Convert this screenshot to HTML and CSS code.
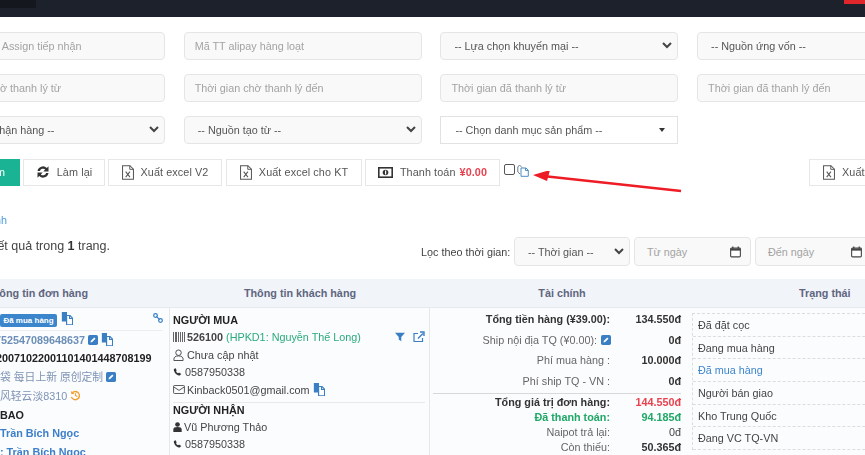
FILE: index.html
```html
<!DOCTYPE html>
<html>
  <head>
    <title>Danh sách đơn hàng</title>
    <link rel="stylesheet" href="styles.css">
  </head>
  <body>
    <svg class="defs" width="0" height="0">
      <symbol id="i-copy" viewBox="0 0 14 15">
        <path d="M1 0h6v4h-1v7h-5z" fill="#3a7fc4"/>
        <path d="M6.5 4h4l3 3v8h-7z" fill="#fff" stroke="#3a7fc4" stroke-width="1.4"/>
        <path d="M10 4v3.500h3.500" fill="none" stroke="#3a7fc4" stroke-width="1.4"/>
      </symbol>
      <symbol id="i-edit" viewBox="0 0 12 12">
        <rect width="12" height="12" rx="2" fill="#3a7fc4"/>
        <path d="M3 9l.5-2 4-4 1.500 1.500-4 4z" fill="#fff"/>
      </symbol>
      <symbol id="i-excel" viewBox="0 0 13 16">
        <path d="M.6.6h8l3.800 3.800v11H.6z" fill="#fff" stroke="#555" stroke-width="1.100"/>
        <path d="M8.400.6v4h4" fill="none" stroke="#555"/>
        <path d="M4 7l4.600 6M8.600 7l-4.600 6" fill="none" stroke="#555" stroke-width="1.100"/>
      </symbol>
      <symbol id="i-phone" viewBox="0 0 12 12">
        <path d="M1 2.500l2-2 2 3-1 1c.5 1.500 1.500 2.500 3 3l1-1 3 2-2 2C5 10.500 1.500 7 1 2.500z" fill="#333"/>
      </symbol>
      <symbol id="i-calendar" viewBox="0 0 12 12">
        <rect x=".7" y="1.700" width="10.600" height="9.600" rx="1" fill="#fff" stroke="#444" stroke-width="1.200"/>
        <path d="M.7 2h10.600v2.500H.7z" fill="#444"/>
        <path d="M3 0v2.500M9 0v2.500" stroke="#444" stroke-width="1.400"/>
      </symbol>
    </svg>

    <div class="navbar">
      <span class="nav-logo"></span>
      <span class="nav-alert"></span>
    </div>

    <div class="page">
      <form class="filters">
        <input class="field assign-field" placeholder="Nhân viên được Assign tiếp nhận" />
        <input class="field" placeholder="Mã TT alipay hàng loạt" />
        <select class="field"><option>-- Lựa chọn khuyến mại --</option></select>
        <select class="field"><option>-- Nguồn ứng vốn --</option></select>

        <input class="field wait-field" placeholder="Thời gian chờ thanh lý từ" />
        <input class="field" placeholder="Thời gian chờ thanh lý đến" />
        <input class="field" placeholder="Thời gian đã thanh lý từ" />
        <input class="field" placeholder="Thời gian đã thanh lý đến" />

        <select class="field"><option>-- Trạng thái nhận hàng --</option></select>
        <select class="field"><option>-- Nguồn tạo từ --</option></select>
        <div class="multi">-- Chọn danh mục sản phẩm --<span class="caret"></span></div>
      </form>

      <div class="actions">
        <button type="button" class="btn btn-green">Tìm kiếm</button>
        <button type="button" class="btn btn-reset">
          <svg class="ico-reset" viewBox="0 0 14 14"><path d="M1.500 6a5.500 5.500 0 0 1 9.300-3L12.500 1.300V6.500H7.300l1.900-1.900A3.200 3.200 0 0 0 3.900 6zM12.500 8a5.500 5.500 0 0 1-9.300 3L1.500 12.700V7.500h5.200l-1.900 1.900A3.200 3.200 0 0 0 10.100 8z" fill="#333"/></svg>
          Làm lại
        </button>
        <button type="button" class="btn btn-v2"><svg class="ico-excel"><use href="#i-excel"/></svg>Xuất excel V2</button>
        <button type="button" class="btn btn-kt"><svg class="ico-excel"><use href="#i-excel"/></svg>Xuất excel cho KT</button>
        <button type="button" class="btn btn-pay">
          <svg class="ico-money" viewBox="0 0 15 11"><rect x=".8" y=".8" width="13.400" height="9.400" fill="#fff" stroke="#333" stroke-width="1.600"/><circle cx="7.500" cy="5.500" r="2.800" fill="#333"/><rect x="7" y="3.500" width="1.200" height="4" fill="#fff"/></svg>
          Thanh toán <b class="price">¥0.00</b>
        </button>
        <span class="check-box"></span>
        <svg class="ico-copy-top" viewBox="0 0 12 13"><path d="M5 3.500L2.500 1 .8 3v5l2.200 2" fill="none" stroke="#6b7c90"/><path d="M4 4h5l2.300 2.300v6H4z" fill="#fff" stroke="#4a8cc9"/><path d="M8.500 4v2.500h2.800" fill="none" stroke="#4a8cc9"/></svg>
        <button type="button" class="btn btn-right"><svg class="ico-excel"><use href="#i-excel"/></svg>Xuất excel</button>
      </div>

      <div class="quick-link"><a href="#">Lọc nhanh</a></div>

      <div class="result-row">
        <div class="summary">Có 1 kết quả trong <b>1</b> trang.</div>
        <div class="time-filter">
          <label>Lọc theo thời gian:</label>
          <select class="field time-select"><option>-- Thời gian --</option></select>
          <div class="date-box">Từ ngày<svg class="ico-cal"><use href="#i-calendar"/></svg></div>
          <div class="date-box">Đến ngày<svg class="ico-cal"><use href="#i-calendar"/></svg></div>
        </div>
      </div>

      <div class="orders">
        <div class="head head-order">Thông tin đơn hàng</div>
        <div class="head">Thông tin khách hàng</div>
        <div class="head head-money">Tài chính</div>
        <div class="head head-status">Trạng thái</div>

        <div class="cell order-cell">
          <div class="order-top">
            <span class="badge">Đã mua hàng</span>
            <svg class="ico-copy"><use href="#i-copy"/></svg>
            <svg class="ico-link" viewBox="0 0 12 12"><circle cx="3" cy="3" r="2.200" fill="none" stroke="#3a7fc4" stroke-width="1.500"/><circle cx="9" cy="9" r="2.200" fill="none" stroke="#3a7fc4" stroke-width="1.500"/><path d="M4 4l4 4" stroke="#3a7fc4" stroke-width="1.500"/></svg>
          </div>
          <div class="order-line code">752547089648637<svg class="ico-edit"><use href="#i-edit"/></svg><svg class="ico-copy"><use href="#i-copy"/></svg></div>
          <div class="order-line strong long">20071022001101401448708199</div>
          <div class="order-line cjk">袋 每日上新 原创定制<svg class="ico-edit"><use href="#i-edit"/></svg></div>
          <div class="order-line cjk">风轻云淡8310<svg class="ico-history" viewBox="0 0 12 12"><path d="M2.500 3a4.500 4.500 0 1 1-1 4.500" fill="none" stroke="#f0a030" stroke-width="1.500"/><path d="M1 1l.5 3.500L5 4z" fill="#f0a030"/><path d="M6 3.500V6l2 1" fill="none" stroke="#f0a030" stroke-width="1.200"/></svg></div>
          <div class="order-line strong">BAO</div>
          <div class="order-line staff">Trần Bích Ngọc</div>
          <div class="order-line staff">: Trần Bích Ngọc</div>
        </div>

        <div class="cell customer-cell">
          <div class="cust-title">NGƯỜI MUA</div>
          <div class="cust-line">
            <svg class="ico-bar" viewBox="0 0 12 10"><path d="M0 0h1v10H0zM2 0h2v10H2zM5 0h1v10H5zM7 0h1v10H7zM9 0h1v10H9zM11 0h1v10h-1z" fill="#666"/></svg>
            <b class="cust-id">526100</b>&nbsp;<span class="cust-green">(HPKD1: Nguyễn Thế Long)</span>
            <svg class="ico-filter" viewBox="0 0 12 12"><path d="M0 1h12L7.500 6v5l-3-2V6z" fill="#3a7fc4"/></svg>
            <svg class="ico-out" viewBox="0 0 12 12"><path d="M9.500 7v3.500h-8.500V2.500H5" fill="none" stroke="#3a7fc4" stroke-width="1.200"/><path d="M5 7.500l5-5M7 1h4v4" fill="none" stroke="#3a7fc4" stroke-width="1.400"/></svg>
          </div>
          <div class="cust-line">
            <svg class="ico-user" viewBox="0 0 12 13"><circle cx="6" cy="4" r="3" fill="none" stroke="#444"/><path d="M1 12.500V11c0-2 1.500-3.500 5-3.500s5 1.500 5 3.500v1.500z" fill="none" stroke="#444"/></svg>Chưa cập nhật
          </div>
          <div class="cust-line"><svg class="ico-phone"><use href="#i-phone"/></svg>0587950338</div>
          <div class="cust-line">
            <svg class="ico-mail" viewBox="0 0 13 10"><rect x=".5" y=".5" width="12" height="9" rx="1" fill="none" stroke="#444"/><path d="M.5 2l6 4 6-4" fill="none" stroke="#444"/></svg>Kinback0501@gmail.com<svg class="ico-copy mail-copy"><use href="#i-copy"/></svg>
          </div>
          <div class="cust-title second">NGƯỜI NHẬN</div>
          <div class="cust-line">
            <svg class="ico-person" viewBox="0 0 10 12"><circle cx="5" cy="3" r="2.800" fill="#333"/><path d="M0 12V9c0-2 1.500-3 5-3s5 1 5 3v3z" fill="#333"/></svg>Vũ Phương Thảo
          </div>
          <div class="cust-line"><svg class="ico-phone"><use href="#i-phone"/></svg>0587950338</div>
        </div>

        <div class="cell money-cell">
          <div class="money-top">
            <div class="money-row"><b>Tổng tiền hàng (¥39.00):</b><b class="val">134.550đ</b></div>
            <div class="money-row"><span>Ship nội địa TQ (¥0.00):<svg class="ico-edit"><use href="#i-edit"/></svg></span><b class="val">0đ</b></div>
            <div class="money-row"><span>Phí mua hàng :</span><b class="val">10.000đ</b></div>
            <div class="money-row"><span>Phí ship TQ - VN :</span><b class="val">0đ</b></div>
          </div>
          <div class="money-row tight"><b>Tổng giá trị đơn hàng:</b><b class="val red">144.550đ</b></div>
          <div class="money-row tight green"><b>Đã thanh toán:</b><b class="val">94.185đ</b></div>
          <div class="money-row tight"><span>Naipot trả lại:</span><span class="val">0đ</span></div>
          <div class="money-row tight"><span>Còn thiếu:</span><b class="val">50.365đ</b></div>
        </div>

        <div class="cell status-cell">
          <ul class="status-list">
            <li>Đã đặt cọc</li>
            <li>Đang mua hàng</li>
            <li class="active">Đã mua hàng</li>
            <li>Người bán giao</li>
            <li>Kho Trung Quốc</li>
            <li>Đang VC TQ-VN</li>
          </ul>
        </div>
      </div>
    </div>

    <!-- annotation arrow drawn over the screenshot -->
    <svg class="arrow" width="160" height="30" viewBox="0 0 160 30">
      <path d="M150 20L12 5" stroke="#ee1c25" stroke-width="2.600" fill="none"/>
      <path d="M2 4l17-5-3 11z" fill="#ee1c25"/>
    </svg>
  </body>
</html>
```

FILE: styles.css
```css
* {
  box-sizing: border-box;
}

html,
body {
  margin: 0;
  height: 455px;
  overflow: hidden;
}

body {
  position: relative;
  font-family: "Liberation Sans", Arial, "Noto Sans CJK SC", sans-serif;
  font-size: 10.8px;
  color: #555;
  background: #fff;
  filter: blur(0.35px);
}

.defs {
  position: absolute;
}

.navbar {
  height: 17px;
  background: #1c212c;
  display: flex;
  justify-content: space-between;
  align-items: flex-start;
}

.nav-logo {
  width: 36px;
  height: 8px;
  background: #14171e;
}

.nav-alert {
  width: 21px;
  height: 4px;
  background: #e0252b;
}

/* the page is wider than the window, its left side is cut off */
.page {
  width: 1017px;
  margin-left: -82px;
}

.filters {
  display: grid;
  grid-template-columns: 247px 238px 238px 238px;
  column-gap: 18.7px;
  row-gap: 13.5px;
  padding-top: 14.5px;
}

.field {
  height: 28.5px;
  width: 100%;
  border: 1.5px solid #e4e5e6;
  border-radius: 4px;
  background-color: #f9f9f9;
  padding: 0 10px;
  font-family: inherit;
  font-size: 10.8px;
  color: #555;
}

.field::placeholder {
  color: #a3a3a3;
  opacity: 1;
}

.assign-field {
  padding-left: 3px;
}

.wait-field {
  padding-left: 21px;
}

select.field {
  appearance: none;
  padding-left: 13px;
  background-image: url("data:image/svg+xml;utf8,<svg xmlns='http://www.w3.org/2000/svg' width='10' height='7'><path d='M1 1l4 4 4-4' fill='none' stroke='%23444' stroke-width='2'/></svg>");
  background-repeat: no-repeat;
  background-position: right 5px center;
}

.multi {
  height: 28px;
  display: flex;
  align-items: center;
  justify-content: space-between;
  padding: 0 12px 0 14px;
  border: 1px solid #e2e2e2;
  background: #fff;
  color: #555;
}

.caret {
  border-left: 3.5px solid transparent;
  border-right: 3.5px solid transparent;
  border-top: 4px solid #333;
}

.actions {
  display: flex;
  align-items: flex-start;
  margin-top: 14.5px;
}

.btn {
  height: 27.5px;
  display: flex;
  align-items: center;
  justify-content: center;
  gap: 7px;
  border: 1.5px solid #e7e7e7;
  background: #fff;
  font-family: inherit;
  font-size: 10.8px;
  color: #555;
  letter-spacing: 0.1px;
  padding: 0;
  flex: none;
}

.btn-green {
  width: 102px;
  margin-right: 3px;
  background: #1ab394;
  border-color: #1ab394;
  color: #fff;
  justify-content: flex-end;
  padding-right: 14px;
}

.btn-reset {
  width: 82px;
  margin-right: 3px;
}

.btn-v2 {
  width: 114px;
  margin-right: 4px;
}

.btn-kt {
  width: 136px;
  margin-right: 3px;
}

.btn-pay {
  width: 135px;
}

.btn-right {
  width: 120px;
  margin-left: 280px;
  justify-content: flex-start;
  padding-left: 13px;
}

.price {
  color: #e9424f;
  margin-left: -3px;
}

.ico-reset {
  width: 14px;
  height: 14px;
}

.ico-excel {
  width: 12px;
  height: 15px;
}

.ico-money {
  width: 15px;
  height: 11px;
}

.check-box {
  width: 11px;
  height: 11px;
  margin: 5px 2px 0 4px;
  border: 1px solid #555;
  border-radius: 2px;
  flex: none;
}

.ico-copy-top {
  width: 12px;
  height: 13px;
  margin-top: 5px;
  flex: none;
}

.quick-link {
  width: 89px;
  margin-top: 26px;
  height: 16px;
  line-height: 16px;
  text-align: right;
}

.quick-link a {
  color: #4a9be0;
  text-decoration: none;
}

.result-row {
  display: flex;
  align-items: flex-start;
  margin-top: 9px;
}

.summary {
  width: 192px;
  flex: none;
  padding-top: 2px;
  text-align: right;
  font-size: 12.5px;
  color: #444;
  white-space: nowrap;
}

.summary b {
  color: #333;
}

.time-filter {
  display: flex;
  align-items: center;
  gap: 4px;
  margin-left: 311px;
}

.time-filter label {
  width: 89px;
  color: #444;
  white-space: nowrap;
}

.time-select {
  width: 116px;
  height: 29px;
}

.date-box {
  width: 117px;
  height: 29px;
  display: flex;
  align-items: center;
  justify-content: space-between;
  padding: 0 9px 0 12px;
  border: 1.5px solid #e4e5e6;
  border-radius: 4px;
  background: #f9f9f9;
  color: #a3a3a3;
}

.ico-cal {
  width: 11px;
  height: 12px;
}

.orders {
  display: grid;
  grid-template-columns: 252px 260px 255px 250px;
  margin-top: 13px;
  background: #fbfcfe;
}

.head {
  height: 29px;
  background: #f1f4f9;
  border-bottom: 1px solid #e8e9ec;
  display: flex;
  align-items: center;
  justify-content: center;
  font-weight: bold;
  color: #5f6680;
}

.head-order {
  justify-content: flex-end;
  padding-right: 82px;
}

.head-money {
  padding-left: 9px;
}

.head-status {
  justify-content: flex-start;
  padding-left: 114px;
}

.cell {
  height: 147px;
  overflow: hidden;
}

.order-cell {
  padding: 4px 0 0 82px;
  border-right: 1.5px solid #e6e7ea;
}

.order-top {
  display: flex;
  align-items: flex-start;
  height: 18.5px;
  margin-right: 6px;
  border-bottom: 1px solid #eceef1;
}

.badge {
  width: 57px;
  height: 13px;
  margin: 2px 4px 0 0;
  line-height: 13px;
  border-radius: 2px;
  background: #3a85cc;
  color: #fff;
  font-size: 8px;
  font-weight: bold;
  text-align: center;
}

.ico-copy {
  width: 12px;
  height: 13px;
  flex: none;
}

.ico-link {
  width: 10px;
  height: 10px;
  margin: 1px 0 0 auto;
}

.ico-edit {
  width: 10px;
  height: 10px;
  margin: 0 3px;
  vertical-align: -1px;
}

.ico-history {
  width: 11px;
  height: 11px;
  margin-left: 3px;
  vertical-align: -1px;
}

.order-line {
  height: 18.8px;
  line-height: 18px;
  white-space: nowrap;
  color: #444;
}

.order-line .ico-copy {
  vertical-align: -2px;
}

.order-line.code {
  margin-left: -5px;
  font-weight: bold;
  color: #6c8fb8;
}

.order-line.strong {
  font-weight: bold;
  color: #222;
}

.order-line.long {
  margin-left: -4px;
}

.order-line.cjk {
  color: #7e93b4;
}

.order-line.staff {
  font-weight: bold;
  color: #3d7fc9;
}

.customer-cell {
  padding: 3.5px 4px 0 3px;
  border-right: 1.5px solid #e6e7ea;
  color: #444;
}

.cust-title {
  height: 17px;
  line-height: 16px;
  font-weight: bold;
  color: #222;
}

.cust-title.second {
  margin-top: 3px;
  height: 16.5px;
  line-height: 15px;
  border-top: 1px solid #e8e8e8;
}

.cust-line {
  height: 17.5px;
  display: flex;
  align-items: center;
  white-space: nowrap;
}

.cust-id {
  color: #444;
}

.cust-green {
  color: #2bab7b;
}

.ico-bar {
  width: 12px;
  height: 10px;
  margin-right: 2px;
}

.ico-filter {
  width: 10px;
  height: 10px;
  margin-left: auto;
  margin-right: 8px;
}

.ico-out {
  width: 12px;
  height: 12px;
}

.ico-user {
  width: 11px;
  height: 12px;
  margin-right: 3px;
}

.ico-phone {
  width: 9px;
  height: 10px;
  margin-right: 3px;
}

.ico-mail {
  width: 12px;
  height: 9px;
  margin-right: 2px;
}

.mail-copy {
  margin-left: 3px;
}

.ico-person {
  width: 9px;
  height: 10px;
  margin-right: 2px;
}

.money-cell {
  padding: 1px 4px 0 3px;
  color: #666;
}

.money-top {
  padding-bottom: 2px;
  border-bottom: 1px solid #d9d9d9;
}

.money-row {
  height: 20.5px;
  display: flex;
  align-items: center;
  justify-content: flex-end;
}

.money-row.tight {
  height: 15px;
}

.money-row .ico-edit {
  margin: 0 -1px 0 4px;
}

.money-row b {
  color: #333;
}

.val {
  width: 71px;
  color: #444;
  text-align: right;
}

.money-row b.red {
  color: #e9424f;
}

.money-row.green b {
  color: #1fa866;
}

.status-cell {
  padding: 5px 0 0 7px;
}

.status-list {
  list-style: none;
  margin: 0;
  padding: 0;
  border-top: 1px dashed #ddd;
  border-left: 1px dashed #ddd;
}

.status-list li {
  height: 22.7px;
  line-height: 22px;
  padding-left: 5px;
  border-bottom: 1px dashed #ddd;
  color: #444;
}

.status-list li.active {
  color: #3d85cc;
}

.arrow {
  position: absolute;
  left: 531px;
  top: 171px;
}
```
